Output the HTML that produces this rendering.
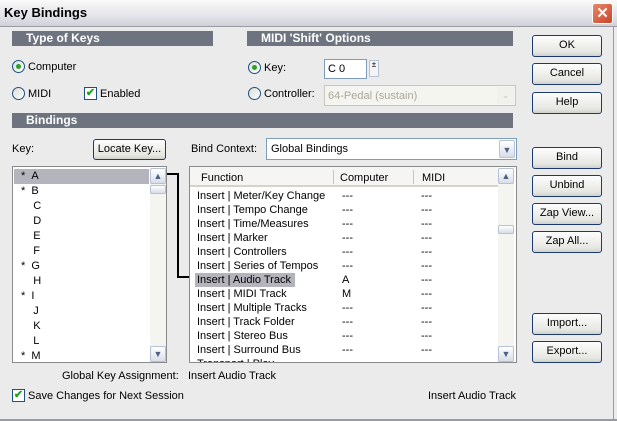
<!DOCTYPE html>
<html><head><style>
*{margin:0;padding:0;box-sizing:border-box}
body{width:617px;height:421px;overflow:hidden;background:#ebebeb;font-family:"Liberation Sans",sans-serif;font-size:11px;color:#000;position:relative}
.a{position:absolute;white-space:nowrap}
.hdr{position:absolute;background:#6d7480;color:#fff;font-weight:bold;font-size:12px;padding-left:14px;line-height:15px;height:15px}
.btn{position:absolute;border:1px solid #1c3a6e;border-radius:3px;background:linear-gradient(#fdfdfd,#e6e6e2 80%,#d2d2cc);text-align:center;font-size:11px;line-height:19px}
.rad{position:absolute;width:13px;height:13px;border:1px solid #1c5180;border-radius:50%;background:linear-gradient(135deg,#dcdcd8,#fff)}
.rad.on::after{content:"";position:absolute;left:3px;top:3px;width:5px;height:5px;border-radius:50%;background:#2aa22a}
.chk{position:absolute;width:13px;height:13px;border:1px solid #1c5180;background:#fff;color:#21a121;font-size:11px;line-height:11px;text-align:center;font-weight:bold}
.box{position:absolute;background:#fff;border:1px solid #7f9db9}
.sb{position:absolute;width:16px;background:#f4f4f0}
.arr{position:absolute;left:0;width:16px;height:16px;border:1px solid #b8c2d6;border-radius:2px;background:linear-gradient(#fff,#d8dde8);font-size:9px;text-align:center;line-height:14px;color:#4d6185}
</style></head><body>
<div class="a" style="left:0;top:0;width:617px;height:27px;background:linear-gradient(#fafafa,#e4e4ea 60%,#d0d0d8);border-bottom:1px solid #9a9aa4"></div>
<div class="a" style="left:4px;top:5px;font-weight:bold;font-size:13px">Key Bindings</div>
<div class="a" style="left:592px;top:3px;width:21px;height:21px;border:1px solid #fff;border-radius:3px;background:linear-gradient(135deg,#e8876a,#c8452a);color:#fff;text-align:center;font-size:15px;line-height:19px;font-weight:bold">✕</div>
<div class="a" style="left:613px;top:27px;width:1px;height:394px;background:#9a9aa4"></div>
<div class="a" style="left:0;top:419px;width:617px;height:2px;background:#9a9aa4"></div>

<div class="hdr" style="left:12px;top:31px;width:201px">Type of Keys</div>
<div class="hdr" style="left:247px;top:31px;width:266px">MIDI 'Shift' Options</div>
<div class="hdr" style="left:12px;top:113px;width:501px">Bindings</div>

<div class="rad on" style="left:12px;top:60px"></div><div class="a" style="left:28px;top:61px">Computer</div>
<div class="rad" style="left:12px;top:87px"></div><div class="a" style="left:28px;top:88px">MIDI</div>
<div class="chk" style="left:84px;top:87px">✔</div><div class="a" style="left:100px;top:88px">Enabled</div>

<div class="rad on" style="left:248px;top:61px"></div><div class="a" style="left:264px;top:62px">Key:</div>
<div class="rad" style="left:248px;top:87px"></div><div class="a" style="left:264px;top:88px">Controller:</div>
<div class="box" style="left:324px;top:59px;width:43px;height:20px;padding:3px 0 0 3px">C 0</div>
<div class="a" style="left:369px;top:60px;width:10px;height:17px;border:1px solid #b8c2d6;background:#f4f4f4;font-size:8px;line-height:8px;text-align:center">±</div>
<div class="a" style="left:324px;top:85px;width:192px;height:21px;border:1px solid #c9c7ba;background:#f4f4f0;color:#aca899;padding:4px 0 0 3px">64-Pedal (sustain)<div class="a" style="right:1px;top:1px;width:17px;height:17px;background:#f0f0ec;color:#c9c7ba;text-align:center;line-height:17px;font-size:9px">⌄</div></div>

<div class="a" style="left:12px;top:143px">Key:</div>
<div class="btn" style="left:93px;top:139px;width:73px;height:21px">Locate Key...</div>
<div class="a" style="left:191px;top:143px">Bind Context:</div>
<div class="box" style="left:266px;top:138px;width:251px;height:22px;padding:4px 0 0 4px">Global Bindings<div class="arr" style="left:auto;right:1px;top:1px;height:18px;line-height:18px">▼</div></div>

<div class="box" style="left:12px;top:166px;width:155px;height:197px;border-color:#8a8a8a">
<div class="a" style="left:1px;top:2px;width:135px;height:15px;background:#b4b4bc"></div>
<div class="a" style="left:8px;top:2px;line-height:15px">
*&nbsp;&nbsp;A<br>*&nbsp;&nbsp;B<br>&nbsp;&nbsp;&nbsp;&nbsp;C<br>&nbsp;&nbsp;&nbsp;&nbsp;D<br>&nbsp;&nbsp;&nbsp;&nbsp;E<br>&nbsp;&nbsp;&nbsp;&nbsp;F<br>*&nbsp;&nbsp;G<br>&nbsp;&nbsp;&nbsp;&nbsp;H<br>*&nbsp;&nbsp;I<br>&nbsp;&nbsp;&nbsp;&nbsp;J<br>&nbsp;&nbsp;&nbsp;&nbsp;K<br>&nbsp;&nbsp;&nbsp;&nbsp;L<br>*&nbsp;&nbsp;M</div>
<div class="sb" style="left:137px;top:1px;height:194px">
<div class="arr" style="top:0">▲</div><div class="arr" style="top:17px;height:9px"></div><div class="arr" style="top:178px">▼</div></div>
</div>
<div class="a" style="left:167px;top:173px;width:12px;height:2px;background:#000"></div>
<div class="a" style="left:177px;top:173px;width:2px;height:104px;background:#000"></div>
<div class="a" style="left:177px;top:276px;width:17px;height:2px;background:#000"></div>

<div class="box" style="left:189px;top:166px;width:328px;height:197px;border-color:#8a8a8a;overflow:hidden">
<div class="a" style="left:0;top:0;width:308px;height:20px;border-bottom:2px solid #d6d3c8;background:#f5f5f3"></div>
<div class="a" style="left:11px;top:5px">Function</div>
<div class="a" style="left:143px;top:3px;width:1px;height:14px;background:#c8c5b8"></div>
<div class="a" style="left:150px;top:5px">Computer</div>
<div class="a" style="left:223px;top:3px;width:1px;height:14px;background:#c8c5b8"></div>
<div class="a" style="left:232px;top:5px">MIDI</div>
<div class="a" style="left:5px;top:106px;width:100px;height:14px;background:#b4b4bc"></div>
<div class="a" style="left:7px;top:22px;line-height:14px">Insert | Meter/Key Change<br>Insert | Tempo Change<br>Insert | Time/Measures<br>Insert | Marker<br>Insert | Controllers<br>Insert | Series of Tempos<br>Insert | Audio Track<br>Insert | MIDI Track<br>Insert | Multiple Tracks<br>Insert | Track Folder<br>Insert | Stereo Bus<br>Insert | Surround Bus<br>Transport | Play</div>
<div class="a" style="left:152px;top:22px;line-height:14px">---<br>---<br>---<br>---<br>---<br>---<br>A<br>M<br>---<br>---<br>---<br>---</div>
<div class="a" style="left:231px;top:22px;line-height:14px">---<br>---<br>---<br>---<br>---<br>---<br>---<br>---<br>---<br>---<br>---<br>---</div>
<div class="sb" style="left:308px;top:1px;height:194px">
<div class="arr" style="top:0">▲</div><div class="arr" style="top:57px;height:9px"></div><div class="arr" style="top:178px">▼</div></div>
</div>

<div class="a" style="left:62px;top:370px">Global Key Assignment:</div>
<div class="a" style="left:188px;top:370px">Insert Audio Track</div>
<div class="chk" style="left:12px;top:389px">✔</div><div class="a" style="left:28px;top:390px">Save Changes for Next Session</div>
<div class="a" style="left:428px;top:390px">Insert Audio Track</div>

<div class="btn" style="left:532px;top:35px;width:70px;height:22px">OK</div>
<div class="btn" style="left:532px;top:63px;width:70px;height:22px">Cancel</div>
<div class="btn" style="left:532px;top:92px;width:70px;height:22px">Help</div>
<div class="btn" style="left:532px;top:147px;width:70px;height:22px">Bind</div>
<div class="btn" style="left:532px;top:175px;width:70px;height:22px">Unbind</div>
<div class="btn" style="left:532px;top:203px;width:70px;height:22px">Zap View...</div>
<div class="btn" style="left:532px;top:231px;width:70px;height:22px">Zap All...</div>
<div class="btn" style="left:532px;top:313px;width:70px;height:22px">Import...</div>
<div class="btn" style="left:532px;top:341px;width:70px;height:22px">Export...</div>
</body></html>
